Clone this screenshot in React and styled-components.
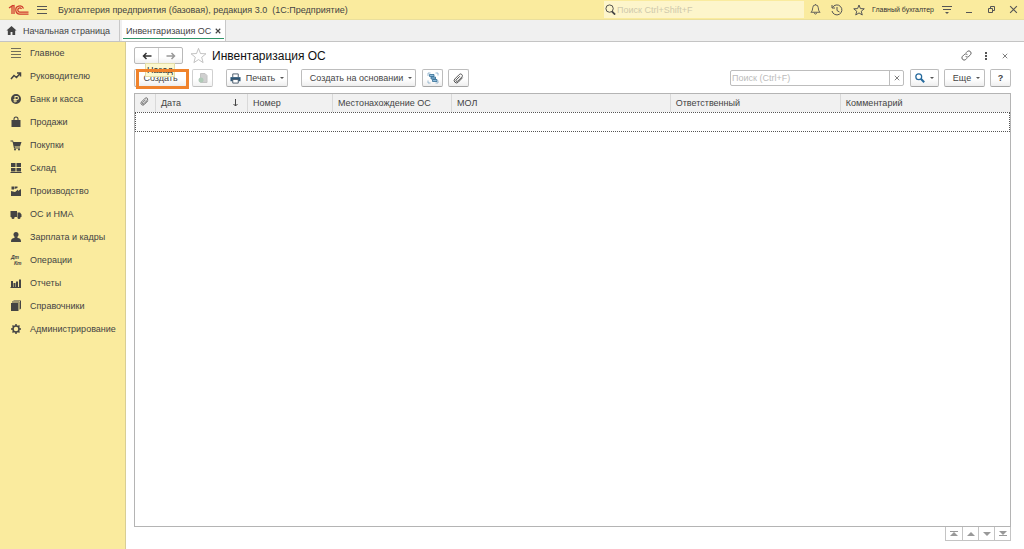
import React from "react";
import styled, { createGlobalStyle, css } from "styled-components";

const GlobalStyle = createGlobalStyle`
  *, *::before, *::after { box-sizing: border-box; }
  body {
    margin: 0;
    background: #fff;
    color: #444;
    font-family: "Liberation Sans", Arial, sans-serif;
    font-size: 9px;
    line-height: 12px;
  }
  button, input { font: inherit; color: inherit; }
`;

const Page = styled.div`
  display: flex;
  flex-direction: column;
  min-height: 100vh;
`;

const TitleBar = styled.header`
  display: flex;
  align-items: center;
  height: 20px;
  padding: 0 0 0 8px;
  background: #faeb9e;
  border-bottom: 1px solid #eadf9c;
`;

const AppName = styled.div`
  flex: 1;
  margin-left: 4px;
  white-space: pre;
`;

const IconButton = styled.button`
  display: flex;
  align-items: center;
  justify-content: center;
  width: ${(p) => p.$width || 22}px;
  height: 16px;
  padding: 0;
  border: 0;
  background: none;
  color: ${(p) => p.$color || "#555"};
`;

const GlobalSearch = styled.label`
  display: flex;
  align-items: center;
  width: 200px;
  height: 17px;
  gap: 1px;
  padding-left: 1px;
  background: #fdf5cb;
`;

const PlainInput = styled.input`
  flex: 1;
  min-width: 0;
  height: 100%;
  padding: 0;
  border: 0;
  outline: 0;
  background: none;
  &::placeholder { color: ${(p) => p.$hint}; opacity: 1; }
`;

const UserName = styled.span`
  margin: 0 2px;
  color: #333;
  font-size: 7px;
  white-space: nowrap;
`;

const TabBar = styled.nav`
  display: flex;
  height: 22px;
  gap: 2px;
  background: #f0f0f0;
  border-bottom: 1px solid #c4c4c4;
`;

const Tab = styled.a`
  display: flex;
  align-items: center;
  height: 21px;
  color: #444;
  text-decoration: none;
  white-space: nowrap;
  border-right: 1px solid #c8c8c8;
  ${(p) =>
    p.$active
      ? css`
          justify-content: space-between;
          width: 104px;
          padding: 0 4px;
          background: linear-gradient(#2f9468, #2f9468) 50% 18px / 101px 1px no-repeat #fff;
        `
      : css`
          gap: 6px;
          width: 120px;
          padding-left: 6px;
        `}
`;

const Body = styled.div`
  display: flex;
  flex: 1;
`;

const Sidebar = styled.nav`
  flex: 0 0 126px;
  background: #faeb9e;
  border-right: 1px solid #d8ce95;
`;

const MenuItem = styled.a`
  display: flex;
  align-items: center;
  gap: 8px;
  height: 23px;
  padding: 0 0 2px 10px;
  color: #444;
  text-decoration: none;
  white-space: nowrap;
`;

const Main = styled.main`
  display: flex;
  flex: 1;
  flex-direction: column;
  min-width: 0;
  padding: 5px 13px 8px 8px;
`;

const HeadRow = styled.div`
  display: flex;
  align-items: center;
  height: 17px;
`;

const NavPair = styled.div`
  display: flex;
  width: 49px;
  height: 17px;
  border: 1px solid #b9b9b9;
  border-radius: 2px;
  background: linear-gradient(#fff 60%, #f0f0f0);
  button + button { border-left: 1px solid #d0d0d0; }
`;

const FavButton = styled(IconButton)`
  margin-left: 6px;
`;

const Heading = styled.h1`
  flex: 1;
  margin: 0 0 0 5px;
  color: #111;
  font-size: 12px;
  line-height: 16px;
  font-weight: 400;
`;

const Toolbar = styled.div`
  display: flex;
  align-items: center;
  height: 18px;
  margin: 5px 0 6px;
`;

const Button = styled.button`
  display: flex;
  align-items: center;
  justify-content: center;
  gap: 5px;
  width: ${(p) => p.$width}px;
  height: 18px;
  margin-left: ${(p) => p.$gap || 0}px;
  padding: 0 0 0 ${(p) => p.$inset || 0}px;
  border: 1px solid #bdbdbd;
  border-bottom-color: #a5a5a5;
  border-radius: 2px;
  background: linear-gradient(#fff 55%, #eee);
  color: #444;
  white-space: nowrap;
  opacity: ${(p) => (p.disabled ? 0.7 : 1)};
`;

const Caret = styled.span`
  width: 0;
  border: 2px solid transparent;
  border-top-color: #555;
  border-bottom: 0;
`;

const CreateSlot = styled.div`
  position: relative;
`;

const Tooltip = styled.span`
  position: absolute;
  top: -6px;
  left: 11px;
  height: 14px;
  padding: 0 1px;
  border: 1px solid #e3dda8;
  background: #fcf8cf;
  color: #222;
`;

const Highlight = styled.span`
  position: absolute;
  inset: 0 -2px -2px 2px;
  border: 3px solid #f0832c;
  pointer-events: none;
`;

const ListSearch = styled.div`
  display: flex;
  width: 174px;
  height: 16px;
  margin-left: auto;
  padding-left: 1px;
  border: 1px solid #bdbdbd;
  border-radius: 2px;
  button {
    height: 14px;
    border-left: 1px solid #bdbdbd;
  }
`;

const ListPanel = styled.section`
  flex: 1;
  border: 1px solid #b4b4b4;
`;

const Table = styled.table`
  width: 100%;
  table-layout: fixed;
  border-collapse: separate;
  border-spacing: 0;
`;

const HeadCell = styled.th`
  width: ${(p) => p.$width};
  height: 18px;
  padding: 0 0 0 5px;
  background: #f1f1f1;
  border-right: 1px solid #d9d9d9;
  font-weight: 400;
  text-align: left;
  white-space: nowrap;
  &:last-child { border-right: 0; }
`;

const SortLabel = styled.span`
  display: flex;
  align-items: center;
  justify-content: space-between;
  padding-right: 9px;
`;

const EmptyCell = styled.td`
  height: 20px;
  padding: 0;
  border: 1px dotted #555;
`;

const Pager = styled.div`
  display: flex;
  align-self: flex-end;
  border: 1px solid #c4c4c4;
  border-top: 0;
  button { height: 13px; }
  button + button { border-left: 1px solid #c4c4c4; }
`;

const TinyMark = styled.text`
  font-size: 5px;
  font-style: italic;
  font-weight: 700;
`;

const Svg = ({ size = 12, w, h, box = "0 0 24 24", sw = 2, children }) => (
  <svg width={w || size} height={h || size} viewBox={box} fill="none" stroke="currentColor" strokeWidth={sw} aria-hidden="true">
    {children}
  </svg>
);

const Solid = ({ size = 12, w, h, box = "0 0 24 24", children }) => (
  <svg width={w || size} height={h || size} viewBox={box} fill="currentColor" aria-hidden="true">
    {children}
  </svg>
);

const Logo = () => (
  <svg width="21" height="12" viewBox="0 0 42 24" fill="none" stroke="#cf3a2c" aria-label="1С" role="img">
    <path d="M2 8l6-4v16M12 20V3L8 4" strokeWidth="2.500" />
    <path d="M31 9a8 8 0 1 0-7 11h17" strokeWidth="2.500" />
    <path d="M27 10a4 4 0 1 0-3 6h17" strokeWidth="2.500" />
  </svg>
);

const Lines = () => (
  <Svg size={12} box="0 0 12 12" sw={1}>
    <path d="M1 1.500h10M1 4.500h10M1 7.500h10M1 10.500h10" opacity=".75" />
  </Svg>
);

const Clip = ({ size = 11 }) => (
  <Svg size={size} sw={2}>
    <path d="M21 10l-9.500 10a5 5 0 0 1-7.500-7L14 3a4 4 0 0 1 6 5L10 18a2 2 0 0 1-3-3l8-8" />
  </Svg>
);

const Star = ({ size, sw }) => (
  <Svg size={size} sw={sw}>
    <path d="M12 2l2.800 7.200 7.700.4-6 4.900 2 7.500-6.500-4.200L5.500 22l2-7.500-6-4.900 7.700-.4z" />
  </Svg>
);

const Cross = ({ size = 6, sw = 1 }) => (
  <Svg size={size} box="0 0 8 8" sw={sw}>
    <path d="M1 1l6 6M7 1L1 7" />
  </Svg>
);

const Arrow = ({ left }) => (
  <Svg w={10} h={8} box="0 0 20 16" sw={3}>
    <path d={left ? "M19 8H3M9 2L3 8l6 6" : "M1 8h16M11 2l6 6-6 6"} />
  </Svg>
);

const menu = [
  ["Главное", <Lines />],
  ["Руководителю", <Svg sw={3}><path d="M2 18l6-7 5 4 8-9M14 6h7v7" /></Svg>],
  ["Банк и касса", <Solid><path fillRule="evenodd" d="M12 2a10 10 0 1 0 0 20 10 10 0 0 0 0-20zM9 6h5a4 4 0 0 1 0 8h-3v1h3v2h-3v2H9v-2H7v-2h2v-1H7v-2h2zm2 2v4h3a2 2 0 0 0 0-4z" /></Solid>],
  ["Продажи", <Solid><path fillRule="evenodd" d="M3 8h4V6a5 5 0 0 1 10 0v2h4v14H3zm6 0h6V6a3 3 0 0 0-6 0z" /></Solid>],
  ["Покупки", <Solid><path d="M1 3h5l1 3h16l-3 9H9l1 2h10v2H8L5 5H1z" /><circle cx="10" cy="21" r="2" /><circle cx="18" cy="21" r="2" /></Solid>],
  ["Склад", <Solid><path d="M2 2h9v8H2zM13 2h9v8h-9zM2 12h9v7H2zM13 12h9v7h-9zM1 20h22v2H1z" /></Solid>],
  ["Производство", <Solid><path d="M2 22V12l8 2 6-5v3l6-4v14zM3 3h5v6H3zM9 3h6v3l-6 2z" /></Solid>],
  ["ОС и НМА", <Solid><path d="M1 6h13v12H1zM15 9h5l3 4v5h-8z" /><circle cx="6" cy="19" r="3" /><circle cx="18" cy="19" r="3" /></Solid>],
  ["Зарплата и кадры", <Solid><circle cx="12" cy="7" r="5" /><path d="M9 11h6v3c5 0 7 2 7 8H2c0-6 2-8 7-8z" /></Solid>],
  ["Операции", <Solid box="0 0 12 12"><TinyMark x="1" y="5">Дт</TinyMark><TinyMark x="4" y="11">Кт</TinyMark></Solid>],
  ["Отчеты", <Solid><path d="M2 8h4v12H2zM7 12h4v8H7zM12 9h4v11h-4zM18 5h4v15h-4zM1 20h21v2H1z" /></Solid>],
  ["Справочники", <Solid><path d="M2 6h15v16H2z" /><path d="M4 3h15v16h-1V5H4zM7 1h15v16l-2 2V2H7z" /></Solid>],
  ["Администрирование", <Svg sw={3}><circle cx="12" cy="12" r="6" /><path d="M12 2v4M12 18v4M2 12h4M18 12h4M5 5l3 3M16 16l3 3M19 5l-3 3M8 16l-3 3" /></Svg>],
];

const columns = [
  ["Номер", "85px"],
  ["Местонахождение ОС", "119px"],
  ["МОЛ", "25%"],
  ["Ответственный", "170px"],
  ["Комментарий", "auto"],
];

const pagerIcons = [
  ["В начало", "M1 1h8v1H1zM5 2l4 4H1z"],
  ["Вверх", "M5 2l4 4H1z"],
  ["Вниз", "M1 2h8L5 6z"],
  ["В конец", "M1 1h8L5 5zM1 5h8v1H1z"],
];

export default function App() {
  return (
    <Page>
      <GlobalStyle />
      <TitleBar>
        <Logo />
        <IconButton $width={25} aria-label="Меню">
          <Svg w={10} h={8} box="0 0 10 8" sw={1}><path d="M0 .5h10M0 3.500h10M0 7.500h10" /></Svg>
        </IconButton>
        <AppName>Бухгалтерия предприятия (базовая), редакция 3.0  (1С:Предприятие)</AppName>
        <GlobalSearch>
          <Svg size={11}><circle cx="10" cy="10" r="8" /><path d="M15 16l7 7" strokeWidth="4" /></Svg>
          <PlainInput type="search" aria-label="Поиск" placeholder="Поиск Ctrl+Shift+F" $hint="#cfc9ac" />
        </GlobalSearch>
        <IconButton aria-label="Уведомления">
          <Svg size={11}><path d="M2 18c4-3 3-6 4-10a6 6 0 0 1 12 0c1 4 0 7 4 10zM9 19c1 4 5 4 6 0M12 0v2" /></Svg>
        </IconButton>
        <IconButton aria-label="История">
          <Svg size={12}><path d="M3 7a10 10 0 1 1-1 7M2 2v6h6M12 6v7l5 3" /></Svg>
        </IconButton>
        <IconButton aria-label="Избранное"><Star size={12} sw={2} /></IconButton>
        <UserName>Главный бухгалтер</UserName>
        <IconButton aria-label="Настройки">
          <Svg w={10} h={10} box="0 0 10 10" sw={1}><path d="M0 1.500h10M1 4.500h8" /><path d="M3 7h4L5 9z" fill="currentColor" stroke="none" /></Svg>
        </IconButton>
        <IconButton aria-label="Свернуть">
          <Svg w={6} h={8} box="0 0 6 8" sw={1}><path d="M0 6.500h6" /></Svg>
        </IconButton>
        <IconButton aria-label="Развернуть">
          <Svg size={7} box="0 0 7 7" sw={1}><path d="M.5 2.500h4v4h-4zM2.500 2V.5h4v4H5" /></Svg>
        </IconButton>
        <IconButton aria-label="Закрыть"><Cross size={9} /></IconButton>
      </TitleBar>

      <TabBar>
        <Tab href="#home">
          <Solid size={11}><path d="M12 2l11 10h-3v10h-6v-7h-4v7H4V12H1z" /></Solid>
          Начальная страница
        </Tab>
        <Tab href="#inventory" $active>
          Инвентаризация ОС
          <Cross sw={1.500} />
        </Tab>
      </TabBar>

      <Body>
        <Sidebar>
          {menu.map(([label, icon]) => (
            <MenuItem href="#section" key={label}>
              {icon}
              {label}
            </MenuItem>
          ))}
        </Sidebar>

        <Main>
          <HeadRow>
            <NavPair>
              <IconButton $width={24} $color="#333" aria-label="Назад"><Arrow left /></IconButton>
              <IconButton $width={24} $color="#999" aria-label="Вперед"><Arrow /></IconButton>
            </NavPair>
            <FavButton $width={18} $color="#aaa" aria-label="В избранное"><Star size={17} sw={1} /></FavButton>
            <Heading>Инвентаризация ОС</Heading>
            <IconButton $width={14} aria-label="Ссылка">
              <Svg size={11}><path d="M10 14a5 5 0 0 0 7 0l4-4a5 5 0 0 0-7-7l-3 3M14 10a5 5 0 0 0-7 0l-4 4a5 5 0 0 0 7 7l3-3" /></Svg>
            </IconButton>
            <IconButton $width={26} aria-label="Еще действия">
              <Solid w={2} h={8} box="0 0 2 8"><path d="M0 0h2v2H0zM0 3h2v2H0zM0 6h2v2H0z" /></Solid>
            </IconButton>
            <IconButton $width={12} aria-label="Закрыть форму"><Cross size={6} /></IconButton>
          </HeadRow>

          <Toolbar>
            <CreateSlot>
              <Button $width={53}>Создать</Button>
              <Tooltip role="tooltip">Назад</Tooltip>
              <Highlight />
            </CreateSlot>
            <Button $width={21} $gap={5} disabled aria-label="Скопировать">
              <Svg size={12}><path d="M7 3h9l4 4v14H7z" fill="#bbb" stroke="#aaa" /><circle cx="8" cy="16" r="5" fill="#8fb49a" stroke="none" /></Svg>
            </Button>
            <Button $width={62} $gap={13}>
              <Svg size={11}><path d="M6 9V2h12v7" stroke="#456" /><path d="M1 9h22v9H1z" fill="#2e5878" stroke="none" /><path d="M6 14h12v8H6z" fill="#fff" stroke="#456" /></Svg>
              Печать
              <Caret />
            </Button>
            <Button $width={115} $gap={13} $inset={5}>Создать на основании<Caret /></Button>
            <Button $width={21} $gap={6} aria-label="Структура подчиненности">
              <Svg size={12} sw={1.500}>
                <path d="M2 8V2h5M17 2h5v5M22 17v5h-5M7 22H2v-5" stroke="#7fa6c4" />
                <path d="M5 5h9v4H5zM8 10h9v4H8zM11 15h9v4h-9z" fill="#8fbbdb" stroke="#28658f" />
              </Svg>
            </Button>
            <Button $width={21} $gap={5} aria-label="Файлы"><Clip /></Button>
            <ListSearch>
              <PlainInput aria-label="Поиск в списке" placeholder="Поиск (Ctrl+F)" $hint="#bbb" />
              <IconButton $width={14} aria-label="Очистить"><Cross /></IconButton>
            </ListSearch>
            <Button $width={29} $gap={6} aria-label="Найти">
              <Svg size={10} sw={3}><circle cx="9" cy="9" r="7" stroke="#25699c" /><path d="M14 14l8 8" stroke="#25699c" strokeWidth="5" /></Svg>
              <Caret />
            </Button>
            <Button $width={41} $gap={5} $inset={4}>Еще<Caret /></Button>
            <Button $width={21} $gap={5} aria-label="Справка"><b>?</b></Button>
          </Toolbar>

          <ListPanel>
            <Table>
              <thead>
                <tr>
                  <HeadCell $width="21px" aria-label="Файлы"><Clip size={9} /></HeadCell>
                  <HeadCell $width="92px">
                    <SortLabel>
                      Дата
                      <Svg w={5} h={8} box="0 0 5 8" sw={1}><path d="M2.500 0v7M.5 5l2 2 2-2" /></Svg>
                    </SortLabel>
                  </HeadCell>
                  {columns.map(([label, width]) => (
                    <HeadCell key={label} $width={width}>{label}</HeadCell>
                  ))}
                </tr>
              </thead>
              <tbody>
                <tr><EmptyCell colSpan={7} /></tr>
              </tbody>
            </Table>
          </ListPanel>
          <Pager>
            {pagerIcons.map(([label, d]) => (
              <IconButton key={label} $width={16} aria-label={label}>
                <Solid w={10} h={8} box="0 0 10 8"><path d={d} opacity=".6" /></Solid>
              </IconButton>
            ))}
          </Pager>
        </Main>
      </Body>
    </Page>
  );
}
